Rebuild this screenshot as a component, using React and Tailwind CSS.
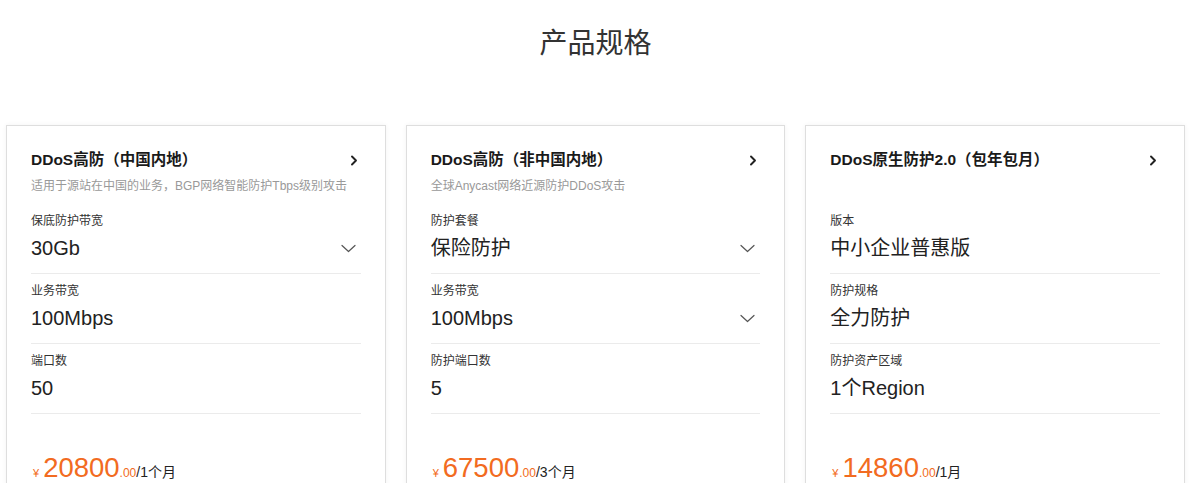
import React from 'react'

const FONT = { fontFamily: '"Liberation Sans", Arial, "Noto Sans CJK SC", sans-serif' }

const PRODUCTS = [
  {
    title: 'DDoS高防（中国内地）',
    desc: '适用于源站在中国的业务，BGP网络智能防护Tbps级别攻击',
    rows: [
      { label: '保底防护带宽', value: '30Gb', select: true },
      { label: '业务带宽', value: '100Mbps' },
      { label: '端口数', value: '50' },
    ],
    price: '20800',
    unit: '/1个月',
  },
  {
    title: 'DDoS高防（非中国内地）',
    desc: '全球Anycast网络近源防护DDoS攻击',
    rows: [
      { label: '防护套餐', value: '保险防护', select: true },
      { label: '业务带宽', value: '100Mbps', select: true },
      { label: '防护端口数', value: '5' },
    ],
    price: '67500',
    unit: '/3个月',
  },
  {
    title: 'DDoS原生防护2.0（包年包月）',
    desc: '',
    rows: [
      { label: '版本', value: '中小企业普惠版' },
      { label: '防护规格', value: '全力防护' },
      { label: '防护资产区域', value: '1个Region' },
    ],
    price: '14860',
    unit: '/1月',
  },
]

function ChevronRight() {
  return (
    <svg width="8" height="11" viewBox="0 0 8 11" fill="none" className="shrink-0 mr-[3px]">
      <path d="M2 1.5l4 4-4 4" stroke="#222" strokeWidth="1.9" strokeLinecap="round" strokeLinejoin="round" />
    </svg>
  )
}

function ChevronDown() {
  return (
    <svg width="15" height="9" viewBox="0 0 15 9" fill="none" className="shrink-0 mr-[5px]">
      <path d="M1 1.5l6.5 6 6.5-6" stroke="#555" strokeWidth="1.2" strokeLinecap="round" strokeLinejoin="round" />
    </svg>
  )
}

function ProductCard({ p }) {
  return (
    <div className="bg-white border border-[#dedede] shadow-[0_0_5px_rgba(0,0,0,0.05)] px-[24px] pt-[23px] pb-[30px]">
      <div className="flex items-center justify-between">
        <h3 className="text-[15.5px] leading-[22px] font-bold text-[#1a1a1a]">{p.title}</h3>
        <ChevronRight />
      </div>
      <p className="mt-[6px] h-[18px] text-[12px] leading-[18px] text-[#999]">{p.desc}</p>
      <div className="mt-[9px]">
        {p.rows.map((r) => (
          <div key={r.label} className="pt-[8px] pb-[11px] border-b border-[#ebebeb]">
            <div className="text-[12px] leading-[18px] text-[#333]">{r.label}</div>
            <div className="mt-[4px] flex items-center justify-between">
              <span className="text-[20px] leading-[28px] text-[#222]">{r.value}</span>
              {r.select && <ChevronDown />}
            </div>
          </div>
        ))}
      </div>
      <div className="pt-[40px] flex items-baseline text-[#f26b21]">
        <span className="text-[11px] leading-none ml-[2px] mr-[4px]">¥</span>
        <span className="text-[27.5px] leading-none">{p.price}</span>
        <span className="text-[12px] leading-none">.00</span>
        <span className="text-[14px] leading-none text-[#222]">{p.unit}</span>
      </div>
    </div>
  )
}

export default function App() {
  return (
    <div className="min-h-screen bg-white" style={FONT}>
      <h2 className="pt-[24px] text-center text-[28px] leading-[40px] text-[#333]">产品规格</h2>
      <div className="mt-[61px] px-[6px] grid grid-cols-3 gap-[20px]">
        {PRODUCTS.map((p) => (
          <ProductCard key={p.title} p={p} />
        ))}
      </div>
    </div>
  )
}
